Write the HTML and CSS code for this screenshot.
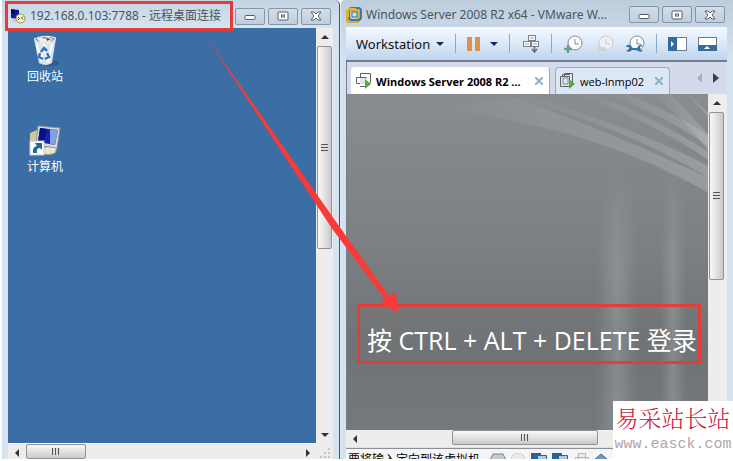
FILE: index.html
```html
<!DOCTYPE html>
<html lang="zh-CN">
<head>
    <meta charset="UTF-8">
    <meta name="viewport" content="width=device-width, initial-scale=1.0">
    <title>远程桌面连接</title>
    <link rel="stylesheet" href="styles.css">
</head>
<body>
    <div class="screen">
        <!-- 远程桌面窗口 -->
        <section class="window rdp">
            <header class="titlebar">
                <svg class="app-icon" width="16" height="16" viewBox="0 0 16 16">
                    <path d="M1 1l8 1v9l-8-1z" fill="#101c9c"/>
                    <path d="M1 1l4 1v4L1 5z" fill="#06085c"/>
                    <path d="M2 11h5v3H4z" fill="#c9ccd0"/>
                    <circle cx="10.500" cy="10.500" r="4.500" fill="#f3f7c8" stroke="#8b9458"/>
                    <path d="M8 9l1.500 1.500L8 12M13 8.500L11.500 10l1.500 1.500" fill="none" stroke="#34420e"/>
                </svg>
                <h1>192.168.0.103:7788 - 远程桌面连接</h1>
                <div class="window-buttons">
                    <button aria-label="最小化"><svg width="12" height="10" viewBox="0 0 12 10"><rect x="1" y="4.500" width="10" height="4" rx="1" fill="#fff" stroke="#555c66"/></svg></button>
                    <button aria-label="最大化"><svg width="12" height="10" viewBox="0 0 12 10"><rect x="1" y="1" width="10" height="8" rx="1" fill="#fff" stroke="#555c66"/><rect x="4.500" y="4" width="3" height="2" fill="#fff" stroke="#555c66"/></svg></button>
                    <button aria-label="关闭"><svg width="12" height="10" viewBox="0 0 12 10"><path d="M1 1h3l2 2 2-2h3L8 5l3 4H8L6 7 4 9H1l3-4z" fill="#fff" stroke="#555c66"/></svg></button>
                </div>
            </header>
            <div class="viewport">
                <div class="desktop">
                    <a class="shortcut" href="#">
                        <svg width="32" height="32" viewBox="0 0 32 32">
                            <ellipse cx="21" cy="28" rx="9" ry="3" fill="#23486e" opacity=".5"/>
                            <path d="M5 4l22-1-4 25q-6 4-13 0z" fill="#dce4ea"/>
                            <path d="M5 4q11-5 22-1-3 5-11 5T5 4z" fill="#8994a0" stroke="#f7fafc"/>
                            <path d="M8 4l4-2 3 2 4-2 5 2-4 3-8 1z" fill="#eef0ee"/>
                            <path d="M17 3l5 1-4 2z" fill="#7a4036"/>
                            <path d="M8 9l4 17 3-17 4 18 4-18" fill="none" stroke="#fff" stroke-width="2"/>
                            <path d="M12 17l3-4 3 3M18 18l2 4-4 2M14 24l-4-2 1-4" fill="none" stroke="#2f78bd" stroke-width="2.500"/>
                        </svg>
                        <span>回收站</span>
                    </a>
                    <a class="shortcut" href="#">
                        <svg width="32" height="32" viewBox="0 0 32 32">
                            <path d="M1 8l7-3v17l-7-3z" fill="#cfc9a0"/>
                            <path d="M14 23q9-4 14 0l-2 5q-8 3-13 0z" fill="#e9e4cc" stroke="#a9a58c"/>
                            <path d="M9 1l22 2-3 20-21-3z" fill="#d9dcda" stroke="#8f9698"/>
                            <path d="M11 3l18 2-3 15-17-3z" fill="#1622b4"/>
                            <path d="M21 4l8 1-3 15-5-1z" fill="#7fa0e8"/>
                            <path d="M11 3l7 1-3 14-6-1z" fill="#0a1180"/>
                            <rect x="1" y="16" width="14" height="14" fill="#fff" stroke="#c5ccd2"/>
                            <path d="M4 28q-1-6 4-7l-2-3h7v7l-2-2q-4 0-3 5z" fill="#256593"/>
                        </svg>
                        <span>计算机</span>
                    </a>
                </div>
                <div class="scroll-y">
                    <button class="up" aria-label="向上"></button>
                    <div class="thumb"></div>
                    <div class="track"></div>
                    <button class="down" aria-label="向下"></button>
                </div>
                <div class="scroll-x">
                    <button class="left" aria-label="向左"></button>
                    <div class="thumb"></div>
                    <div class="track"></div>
                    <button class="right" aria-label="向右"></button>
                </div>
                <svg class="grip" width="17" height="17" viewBox="0 0 17 17"><path d="M12 5h2v2h-2zM8 9h2v2H8zM12 9h2v2h-2zM4 13h2v2H4zM8 13h2v2H8zM12 13h2v2h-2z" fill="#c3c5c8"/></svg>
            </div>
        </section>

        <!-- 虚拟机窗口 -->
        <section class="window vmware">
            <header class="titlebar">
                <svg class="app-icon" width="16" height="16" viewBox="0 0 16 16">
                    <rect x="1" y="3" width="12" height="12" rx="3" fill="none" stroke="#e5a820" stroke-width="3"/>
                    <rect x="3" y="1" width="12" height="12" rx="3" fill="none" stroke="#2e7fa8" stroke-width="2"/>
                    <path d="M2 10V4q0-2 3-2h5" fill="none" stroke="#e8b52c" stroke-width="2"/>
                    <rect x="6" y="5" width="5" height="5" fill="#c9e5ee" stroke="#356f90"/>
                </svg>
                <h1>Windows Server 2008 R2 x64 - VMware W...</h1>
                <div class="window-buttons">
                    <button aria-label="最小化"><svg width="12" height="10" viewBox="0 0 12 10"><rect x="1" y="4.500" width="10" height="4" rx="1" fill="#fff" stroke="#555c66"/></svg></button>
                    <button aria-label="最大化"><svg width="12" height="10" viewBox="0 0 12 10"><rect x="1" y="1" width="10" height="8" rx="1" fill="#fff" stroke="#555c66"/><rect x="4.500" y="4" width="3" height="2" fill="#fff" stroke="#555c66"/></svg></button>
                    <button aria-label="关闭"><svg width="12" height="10" viewBox="0 0 12 10"><path d="M1 1h3l2 2 2-2h3L8 5l3 4H8L6 7 4 9H1l3-4z" fill="#fff" stroke="#555c66"/></svg></button>
                </div>
            </header>
            <nav class="toolbar">
                <button class="menu">Workstation<i class="caret"></i></button>
                <i class="sep"></i>
                <button class="pause" aria-label="暂停"><svg width="14" height="14" viewBox="0 0 14 14"><path d="M0 0h5v14H0zM8 0h5v14H8z" fill="#d9944a"/></svg><i class="caret blue"></i></button>
                <i class="sep"></i>
                <button aria-label="发送 Ctrl+Alt+Del"><svg width="18" height="18" viewBox="0 0 18 18"><g fill="#f4f6f8" stroke="#7c838a"><rect x="6.500" y=".5" width="7" height="5"/><rect x="1.500" y="6.500" width="7" height="5"/><rect x="9.500" y="6.500" width="7" height="5"/></g><path d="M8 3h4M3 9h4M11 9h4" stroke="#a2a8ae"/><path d="M12.500 11v5M10 14l2.500 3 2.500-3" fill="none" stroke="#5f6d7c" stroke-width="1.500"/></svg></button>
                <i class="sep"></i>
                <div class="snapshots">
                    <button aria-label="拍摄快照"><svg width="20" height="18" viewBox="0 0 20 18"><circle cx="12" cy="8" r="7" fill="#fbfcfd" stroke="#858b91"/><path d="M12 4v5h4" fill="none" stroke="#858b91"/><path d="M1 14h8M5 10v8" stroke="#6d9e88" stroke-width="2.500"/></svg></button>
                    <button aria-label="恢复快照" disabled><svg width="20" height="18" viewBox="0 0 20 18"><circle cx="12" cy="8" r="7" fill="#edf1f5" stroke="#c8cdd2"/><path d="M12 4v5h4" fill="none" stroke="#c8cdd2"/><path d="M2 14l4-4v2h6v4H6v2z" fill="#d0d4d8"/></svg></button>
                    <button aria-label="管理快照"><svg width="20" height="18" viewBox="0 0 20 18"><circle cx="12" cy="8" r="7" fill="#fbfcfd" stroke="#858b91"/><path d="M12 4v5h4" fill="none" stroke="#858b91"/><path d="M2 10q4-1 5 3h5q2-4 6-3l-3 2v2l3 2q-4 2-6-1H7q-2 3-6 1l3-2v-2H1z" fill="#3374a8"/></svg></button>
                </div>
                <i class="sep"></i>
                <div class="panes">
                    <button aria-label="显示库"><svg width="19" height="14" viewBox="0 0 19 14"><rect x=".5" y=".5" width="18" height="13" fill="#fff" stroke="#6f7e8c"/><path d="M0 0h9v14H0z" fill="#346c9e"/><path d="M3 4l3 3-3 3z" fill="#fff"/></svg></button>
                    <button aria-label="显示缩略图"><svg width="19" height="14" viewBox="0 0 19 14"><rect x=".5" y=".5" width="18" height="13" fill="#fff" stroke="#6f7e8c"/><path d="M0 8h19v6H0z" fill="#346c9e"/><path d="M6 12l3-3 3 3z" fill="#fff"/></svg></button>
                </div>
            </nav>
            <div class="tabs">
                <div class="tab active">
                    <svg width="16" height="16" viewBox="0 0 16 16"><path d="M4.500 5V.5h10V10M10 10.500H.5v-6h10v9H4" fill="none" stroke="#5c6167"/><path d="M4 5h7v6H4z" fill="#e4e2f0"/><path d="M9 6l6 5-6 5z" fill="#54ab38"/></svg>
                    <span>Windows Server 2008 R2 ...</span>
                    <button class="close" aria-label="关闭标签"><svg width="8" height="8" viewBox="0 0 8 8"><path d="M0 0l8 8M8 0L0 8" stroke="#8ab3cd" stroke-width="2"/></svg></button>
                </div>
                <div class="tab">
                    <svg width="16" height="16" viewBox="0 0 16 16"><path d="M4.500 3V.5h8V10M10 13.500H.5v-10h9V11M2.500 3V1.500H10" fill="none" stroke="#5c6167"/><path d="M3 5h5v6H3z" fill="#dbe7ef" stroke="#888"/><path d="M9 6l6 5-6 5z" fill="#54ab38"/></svg>
                    <span>web-lnmp02</span>
                    <button class="close" aria-label="关闭标签"><svg width="8" height="8" viewBox="0 0 8 8"><path d="M0 0l8 8M8 0L0 8" stroke="#8ab3cd" stroke-width="2"/></svg></button>
                </div>
                <div class="tab-arrows">
                    <button aria-label="上一个" disabled><svg width="6" height="10" viewBox="0 0 6 10"><path d="M5 0v10L0 5z" fill="#a9aec2"/></svg></button>
                    <button aria-label="下一个"><svg width="6" height="10" viewBox="0 0 6 10"><path d="M0 0v10l6-5z" fill="#39404e"/></svg></button>
                </div>
            </div>
            <div class="viewport">
                <div class="guest">
                    <!-- 登录背景的光束 -->
                    <svg class="rays" viewBox="0 0 362 337" preserveAspectRatio="none">
                        <defs>
                            <linearGradient id="ray" x1="0" x2="1">
                                <stop offset="0" stop-color="#c8d2d4" stop-opacity="0"/>
                                <stop offset="1" stop-color="#c8d2d4" stop-opacity=".3"/>
                            </linearGradient>
                            <linearGradient id="beam" x1="0" x2="1">
                                <stop offset="0" stop-color="#c5cace" stop-opacity="0"/>
                                <stop offset=".5" stop-color="#c5cace" stop-opacity=".26"/>
                                <stop offset="1" stop-color="#c5cace" stop-opacity="0"/>
                            </linearGradient>
                            <linearGradient id="fade" x2="0" y2="1">
                                <stop offset="0" stop-color="#000"/>
                                <stop offset=".4" stop-color="#fff"/>
                            </linearGradient>
                            <mask id="beam-mask"><rect y="70" width="362" height="267" fill="url(#fade)"/></mask>
                        </defs>
                        <g fill="url(#ray)">
                            <path d="M90 14Q250 34 362 99V84Q280 45 170 4z"/>
                            <path d="M170 4Q280 34 362 84V72Q290 34 175 0z"/>
                            <path d="M230 0Q310 30 362 66V58Q310 24 245 0z"/>
                            <path d="M260 0Q320 22 362 52V42Q340 24 280 0z"/>
                            <path d="M305 0q30 20 57 57V40L325 0z"/>
                            <path d="M340 0l22 22v-3L343 0z"/>
                        </g>
                        <g fill="url(#beam)" mask="url(#beam-mask)">
                            <rect x="250" y="70" width="42" height="267"/>
                            <rect x="314" y="70" width="26" height="267"/>
                        </g>
                    </svg>
                    <p class="login">按 CTRL + ALT + DELETE 登录</p>
                </div>
                <div class="scroll-y">
                    <button class="up" aria-label="向上"></button>
                    <div class="thumb"></div>
                    <div class="track"></div>
                </div>
                <div class="scroll-x">
                    <button class="left" aria-label="向左"></button>
                    <div class="track"></div>
                    <div class="thumb"></div>
                    <div class="track"></div>
                </div>
            </div>
            <footer class="status">
                <span>要将输入定向到该虚拟机</span>
                <svg width="120" height="14" viewBox="0 0 120 14">
                    <path d="M3 1h10l3 6H0z" fill="#c7ccd1" stroke="#6f8291"/>
                    <circle cx="28" cy="7" r="7" fill="#ececec" stroke="#c9c9c9"/>
                    <path d="M41 0h10v7H41zM62 0h10v7H62z" fill="#2a6494"/>
                    <path d="M47.500 2.500h9v8h-9zM68.500 2.500h9v8h-9z" fill="#a9cbe3" stroke="#2a6494"/>
                    <path d="M88.500.5h7v6h-7zM85.500 4.500h13v6h-13z" fill="#eee" stroke="#b4b4b4"/>
                    <path d="M104 7l7-6 6 5-4 5h-7z" fill="#7896ad" stroke="#3e6f94"/>
                </svg>
            </footer>
        </section>

        <!-- 标注 -->
        <div class="mark"></div>
        <svg class="arrow" width="200" height="290" viewBox="0 0 200 290"><path d="M2 2L136 193 186 263l7-4 2 22-17-12 4-3L130 197z" fill="#fa3a37"/></svg>
        <div class="watermark">
            <strong>易采站长站</strong>
            <a href="#">www.easck.com</a>
        </div>
    </div>
</body>
</html>
```
FILE: styles.css
```css
body {
    margin: 0;
    background-color: #fff;
    font-family: "Noto Sans", "Noto Sans CJK SC", sans-serif;
    font-size: 12px;
}
button {
    display: flex;
    align-items: center;
    justify-content: center;
    padding: 0;
    border: none;
    background: none;
    color: inherit;
    font: inherit;
}
svg {
    display: block;
    flex: none;
}
.screen {
    position: relative;
    display: grid;
    grid-template-columns: 340fr 393fr;
    height: 100vh;
    padding-bottom: 2px;
    box-sizing: border-box;
    overflow: hidden;
}
.window {
    display: flex;
    flex-direction: column;
    min-width: 0;
    min-height: 0;
}
.rdp {
    margin-left: 2px;
    padding: 0 6px;
    border-right: 1px solid #3f5366;
    border-top-right-radius: 5px;
    background: linear-gradient(#c5d4e3, #d6e3f1 28px);
}
.vmware {
    padding: 0 6px 0 5px;
    border-left: 1px solid #dfe9f3;
    border-top-left-radius: 5px;
    background: linear-gradient(#bccddc, #d5e3f1 60px);
}

/* 标题栏 */
.titlebar {
    display: flex;
    align-items: center;
    height: 28px;
    padding: 4px 2px 0;
    box-sizing: border-box;
}
.vmware .titlebar {
    height: 27px;
    padding: 2px 2px 0 0;
}
.titlebar h1 {
    flex: 1;
    margin: 0 0 0 4px;
    font-size: 12px;
    line-height: 20px;
    font-weight: normal;
    color: #4b5560;
    white-space: nowrap;
}
.window-buttons {
    display: flex;
    gap: 3px;
}
.window-buttons button {
    width: 30px;
    height: 17px;
    border: 1px solid #8696a8;
    border-radius: 2px;
    background: linear-gradient(#d3deea, #bfcedd);
    box-sizing: border-box;
}

/* 滚动条 */
.viewport {
    flex: 1;
    display: grid;
    grid-template: minmax(0, 1fr) 17px / minmax(0, 1fr) 17px;
    min-height: 0;
    background-color: #ededed;
}
.scroll-y, .scroll-x {
    display: flex;
    background-color: #ededed;
}
.scroll-y {
    flex-direction: column;
}
.scroll-y button, .scroll-x button {
    width: 17px;
    height: 17px;
}
.scroll-y button::before, .scroll-x button::before {
    content: "";
    border: 4px solid transparent;
}
.scroll-y .up::before {
    border-bottom-color: #333;
    margin-bottom: 4px;
}
.scroll-y .down::before {
    border-top-color: #333;
    margin-top: 4px;
}
.scroll-x .left::before {
    border-right-color: #333;
    margin-right: 4px;
}
.scroll-x .right::before {
    border-left-color: #333;
    margin-left: 4px;
}
.thumb {
    display: flex;
    align-items: center;
    justify-content: center;
    border: 1px solid #929292;
    border-radius: 2px;
    box-sizing: border-box;
}
.track {
    flex: 1;
}
.scroll-y .thumb {
    width: 15px;
    margin: 1px;
    flex: 0 0 49%;
    background: linear-gradient(90deg, #f7f7f7, #e3e3e3 50%, #c9c9c9);
}
.scroll-x .thumb {
    height: 15px;
    margin: 0 1px;
    flex: 0 0 60px;
    background: linear-gradient(#f7f7f7, #e3e3e3 50%, #c9c9c9);
}
.scroll-y .thumb::before {
    content: "";
    width: 7px;
    height: 8px;
    background: repeating-linear-gradient(#555 0 1px, #ddd 1px 3px);
}
.scroll-x .thumb::before {
    content: "";
    width: 8px;
    height: 7px;
    background: repeating-linear-gradient(90deg, #555 0 1px, #ddd 1px 3px);
}

/* 远程桌面 */
.desktop {
    display: flex;
    flex-direction: column;
    align-items: flex-start;
    gap: 40px;
    padding: 7px 12px;
    background-color: #3b6ea5;
}
.rdp .viewport {
    grid-template-rows: minmax(0, 1fr) 16px;
}
.rdp .scroll-x {
    border-top: 1px solid #fff;
}
.shortcut {
    display: flex;
    flex-direction: column;
    align-items: center;
    width: 50px;
    color: #fff;
    font-family: "Noto Sans CJK SC", sans-serif;
    line-height: 18px;
    text-decoration: none;
}

/* 工具栏 */
.toolbar {
    display: flex;
    align-items: center;
    justify-content: space-between;
    height: 33px;
    padding: 0 10px;
    border-bottom: 2px solid #747d8b;
    background: linear-gradient(#f4f9fe, #dce9f8 50%, #bed4ed);
}
.sep {
    width: 1px;
    height: 19px;
    background-color: #8ba8c4;
}
.caret {
    margin-left: 6px;
    border: 4px solid transparent;
    border-top-color: #222b38;
    border-bottom: none;
}
.caret.blue {
    margin-left: 9px;
    border-top-color: #16207a;
}
.menu {
    font-size: 13px;
    color: #111;
}
.snapshots, .panes {
    display: flex;
    gap: 11px;
}

/* 标签页 */
.tabs {
    display: flex;
    align-items: flex-end;
    gap: 5px;
    height: 32px;
    padding: 0 8px 0 4px;
    border-left: 1px solid #747d8b;
    background-color: #d5d9ec;
}
.tab {
    display: flex;
    align-items: center;
    flex: 0 1 115px;
    height: 27px;
    padding: 0 6px 0 4px;
    border: 1px solid #8baed0;
    border-bottom: none;
    border-radius: 4px 4px 0 0;
    background-color: #dce7f6;
    box-sizing: border-box;
    font-family: "Open Sans", sans-serif;
    font-size: 11px;
    white-space: nowrap;
}
.tab.active {
    flex-basis: 199px;
    background-color: #fff;
    border-color: #fff #8baed0 #fff #fff;
    font-weight: bold;
}
.tab span {
    flex: 1;
    margin-left: 4px;
}
.tab-arrows {
    display: flex;
    gap: 10px;
    margin-left: auto;
    padding-bottom: 11px;
}

/* 虚拟机画面 */
.vmware .viewport {
    padding-right: 2px;
}
.guest {
    position: relative;
    display: flex;
    align-items: flex-end;
    padding: 0 7px 66px 10px;
    border-left: 1px solid #747d8b;
    background: linear-gradient(#898d90, #7c8083 45%, #6f7376 75%, #75797c);
    overflow: hidden;
}
.rays {
    position: absolute;
    inset: 0;
    width: 100%;
    height: 100%;
}
.login {
    position: relative;
    flex: 1;
    min-width: 0;
    margin: 0;
    padding: 12px 0 0 7px;
    border: 3px solid #e33d3a;
    color: #fff;
    font-family: "Open Sans", "Noto Sans CJK SC", sans-serif;
    font-size: 25px;
    line-height: 42px;
    white-space: nowrap;
}
.vmware .scroll-y .thumb {
    flex-basis: 50%;
}
.vmware .scroll-x .thumb {
    flex-basis: 146px;
}
.vmware .scroll-x .track:nth-child(2) {
    flex-grow: 8;
}
.vmware .scroll-x .track:last-child {
    flex-grow: 10;
}
.status {
    display: flex;
    gap: 10px;
    height: 11px;
    margin-top: 1px;
    padding: 4px 2px 0;
    border-top: 1px solid #8b9099;
    background-color: #f5f5f5;
    box-sizing: border-box;
    line-height: 14px;
    overflow: hidden;
}

/* 标注和水印 */
.mark {
    position: absolute;
    top: 1px;
    left: 5px;
    width: 228px;
    height: 30px;
    border: 3px solid #e33d3a;
    box-sizing: border-box;
}
.arrow {
    position: absolute;
    top: 33px;
    left: 203px;
}
.watermark {
    position: absolute;
    right: 0;
    bottom: 0;
    display: flex;
    flex-direction: column;
    align-items: center;
    width: 120px;
    height: 60px;
    padding-top: 2px;
    box-sizing: border-box;
    background-color: #fff;
}
.watermark strong {
    font-family: "Noto Serif CJK SC", "Noto Sans CJK SC", sans-serif;
    font-size: 23px;
    font-weight: 300;
    line-height: 30px;
    color: #c8203c;
}
.watermark a {
    font-family: "Liberation Mono", monospace;
    font-size: 15px;
    line-height: 24px;
    color: #b3a5a8;
    text-decoration: none;
}
```
